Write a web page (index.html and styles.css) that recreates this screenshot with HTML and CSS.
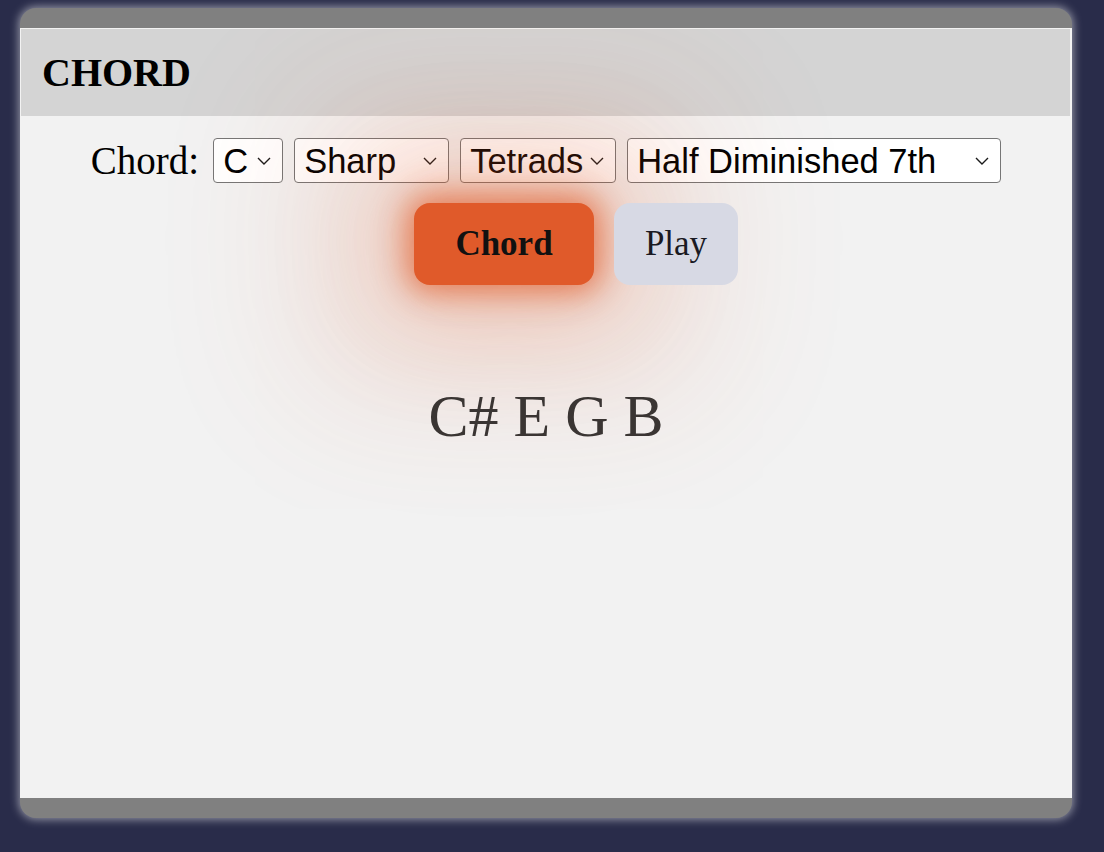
FILE: index.html
```html
<!DOCTYPE html>
<html lang="en">
<head>
<meta charset="utf-8">
<title>Chord</title>
<link rel="stylesheet" href="styles.css">
</head>
<body>
<div class="frame">
  <div class="panel">
    <header class="head"><h1 class="title">CHORD</h1></header>
    <main class="content">
      <div class="controls">
        <label class="lbl">Chord:</label>
        <span class="sel sel-root"><select><option>C</option></select><svg class="chev" viewBox="0 0 14 8" aria-hidden="true"><path d="M1 1l6 6 6-6"/></svg></span>
        <span class="sel sel-acc"><select><option>Sharp</option></select><svg class="chev" viewBox="0 0 14 8" aria-hidden="true"><path d="M1 1l6 6 6-6"/></svg></span>
        <span class="sel sel-type"><select><option>Tetrads</option></select><svg class="chev" viewBox="0 0 14 8" aria-hidden="true"><path d="M1 1l6 6 6-6"/></svg></span>
        <span class="sel sel-quality"><select><option>Half Diminished 7th</option></select><svg class="chev" viewBox="0 0 14 8" aria-hidden="true"><path d="M1 1l6 6 6-6"/></svg></span>
      </div>
      <div class="actions">
        <button class="btn btn-primary">Chord</button>
        <button class="btn btn-secondary">Play</button>
      </div>
      <p class="notes">C# E G B</p>
    </main>
  </div>
</div>
</body>
</html>
```
FILE: styles.css
```css
html, body {
  margin: 0;
  padding: 0;
}
body {
  background: #292c4a;
  width: 1104px;
  height: 852px;
  overflow: hidden;
}
.frame {
  width: 1052px;
  margin: 8px 0 0 20px;
  padding: 20px 0;
  background: #808080;
  border-radius: 16px;
  box-shadow: 0 0 10px 1px rgba(255, 255, 255, 0.55);
}
.panel {
  height: 770px;
  background: #f2f2f2;
  display: flex;
  flex-direction: column;
  overflow: hidden;
}
.head {
  margin: 1px 2px 0 1px;
  height: 87px;
  background: #d4d4d4;
  display: flex;
  align-items: center;
  padding-left: 21px;
}
.title {
  margin: 0;
  font-family: "Liberation Serif", "Times New Roman", serif;
  font-weight: bold;
  font-size: 40px;
  color: #000;
}
.content {
  flex: 1;
  display: flex;
  flex-direction: column;
  align-items: center;
  padding-top: 22px;
}
.controls {
  display: flex;
  align-items: center;
  gap: 11px;
  height: 45px;
}
.lbl {
  font-family: "Liberation Serif", "Times New Roman", serif;
  font-size: 39px;
  color: #000;
  margin-right: 3px;
}
.sel {
  display: flex;
  align-items: center;
  height: 45px;
}
.sel select {
  appearance: none;
  -webkit-appearance: none;
  width: 100%;
  height: 45px;
  margin: 0;
  border: 1px solid #767676;
  border-radius: 4px;
  background: #fff;
  color: #000;
  font-family: "Liberation Sans", Arial, sans-serif;
  font-size: 34.5px;
  padding: 0 0 0 9px;
}
.chev {
  flex: none;
  width: 14px;
  height: 8px;
  margin-left: -26px;
  fill: none;
  stroke: #1a1a1a;
  stroke-width: 1.4;
}
.sel-root { width: 70px; }
.sel-acc { width: 155px; }
.sel-type { width: 156px; }
.sel-quality { width: 374px; }
.actions {
  display: flex;
  gap: 20px;
  margin-top: 20px;
  padding-left: 60px;
}
.btn {
  height: 82px;
  border: none;
  border-radius: 16px;
  font-family: "Liberation Serif", "Times New Roman", serif;
  font-size: 35px;
  padding: 0;
}
.btn-primary {
  width: 180px;
  background: #e05a2a;
  color: #111;
  font-weight: bold;
  box-shadow: 0 0 30px 8px rgba(224, 90, 40, 0.68),
              0 0 110px 30px rgba(224, 90, 40, 0.28),
              0 0 150px 120px rgba(224, 90, 40, 0.1);
}
.btn-secondary {
  width: 124px;
  background: #d7d9e4;
  color: #1a1a22;
}
.notes {
  margin: 101px 0 0;
  font-family: "Liberation Serif", "Times New Roman", serif;
  font-size: 60px;
  line-height: 1;
  color: #3a3533;
}
```
